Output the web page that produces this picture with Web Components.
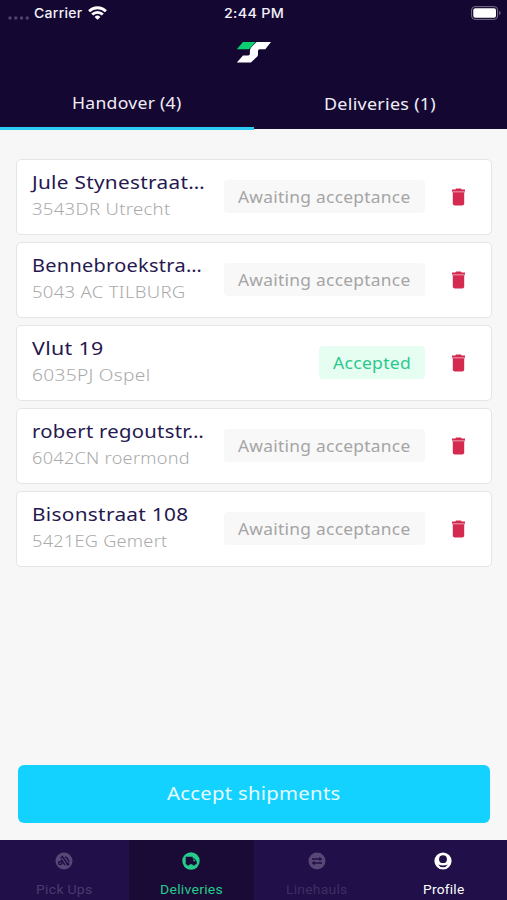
<!DOCTYPE html>
<html lang="en">
<head>
<meta charset="utf-8">
<title>Deliveries</title>
<style>
html,body{margin:0;height:100%;background:#f7f7f7}
body{font-family:"Noto Sans","Open Sans",sans-serif;overflow:hidden}
</style>
</head>
<body>
<courier-app></courier-app>
<script>
const define = (name, html, setup) => customElements.define(name, class extends HTMLElement {
  connectedCallback() {
    if (this.shadowRoot) return;
    this.attachShadow({mode: 'open'}).innerHTML = html;
    if (setup) setup(this, this.shadowRoot);
  }
});

/* One line of text, lightly tracked and widened to the width in its "w" attribute. */
define('fit-text', `<style>
:host{display:block;white-space:nowrap;flex:none}
span{display:inline-block;line-height:inherit;letter-spacing:.25px;transform-origin:0 50%}
</style><span></span>`, (el, root) => {
  const s = root.querySelector('span');
  s.textContent = el.getAttribute('text');
  const w = +el.getAttribute('w');
  const natural = s.getBoundingClientRect().width;
  s.style.transform = `scaleX(${w / natural})`;
  s.style.marginRight = w - natural + 'px';
});

define('status-bar', `<style>
:host{display:grid;grid-template-columns:1fr auto 1fr;align-items:center;height:26px;color:#f3f0f8;font:500 13.5px/26px Inter,sans-serif}
.left{display:flex;align-items:center;padding-left:8px}
.dots{margin-right:5px;margin-top:9px}.wifi{margin-left:5px}
.right{display:flex;justify-content:flex-end;padding-right:6px}
svg{display:block}
</style>
<div class="left">
<svg class="dots" width="21" height="4" fill="#50466a"><circle cx="2" cy="2" r="1.7"/><circle cx="7.8" cy="2" r="1.7"/><circle cx="13.5" cy="2" r="1.7"/><circle cx="19.2" cy="2" r="1.7"/></svg>
<fit-text text="Carrier" w="48.5"></fit-text>
<svg class="wifi" width="19" height="14" viewBox="0 0 19 14" fill="none" stroke="#fff" stroke-width="2.8"><path d="M1.1 5.2a12 12 0 0 1 16.8 0"/><path d="M4.2 8.5a7.6 7.6 0 0 1 10.6 0"/><path d="M6.6 10.9a4.1 4.1 0 0 1 5.8 0L9.5 13.8z" fill="#fff" stroke="none"/></svg>
</div>
<fit-text text="2:44 PM" w="60"></fit-text>
<div class="right"><svg width="30" height="14" viewBox="0 0 30 14"><rect x=".6" y=".6" width="26" height="12.8" rx="3.4" fill="none" stroke="#777087"/><rect x="2.3" y="2.3" width="22.7" height="9.4" rx="2" fill="#fff"/><path d="M28.2 5v4q1.4-.5 1.4-2t-1.4-2" fill="#777087"/></svg></div>`);

define('brand-logo', `<style>:host{display:flex;flex:none;box-sizing:border-box;justify-content:center;padding-top:15px;height:33px}svg{display:block;flex:none}</style>
<svg width="35" height="22" viewBox="0 0 35 22"><path d="M7 1h12.6L13 8.2H.8z" fill="#0bce70"/><path d="M20.6 1H35l-5.7 7.2h-5.8q-1.3 0-1.5 1.5v3.7q-.1 1.5-1.2 2.6l-5.9 5.4H.8l6.2-6.9h5.2q1.7 0 1.7-1.7V10q0-2.2 1.4-3.7z" fill="#fff"/></svg>`);

define('top-tab', `<style>
:host{display:flex;justify-content:center;align-items:flex-end;box-sizing:border-box;height:70px;padding-bottom:12px;border-bottom:3px solid transparent;color:#f1edf6;font-size:15.7px;line-height:22px}
:host([active]){border-color:#2bcdf7;padding-bottom:13px}
</style><slot></slot>`);

define('app-header', `<style>
:host{display:flex;flex:none;flex-direction:column;background:#140832;height:129px}
.tabs{display:grid;grid-template-columns:1fr 1fr;flex:none;margin-top:auto;height:70px;margin-bottom:-1px}
</style>
<status-bar></status-bar><brand-logo></brand-logo>
<div class="tabs"><top-tab active><fit-text text="Handover (4)" w="109.5"></fit-text></top-tab><top-tab><fit-text text="Deliveries (1)" w="112"></fit-text></top-tab></div>`);

define('status-badge', `<style>
:host{display:flex;align-items:center;justify-content:center;box-sizing:border-box;height:33px;padding:1px 14px 0;border-radius:4px;background:#f8f8f8;color:#a5a5a5;font-size:15.7px;line-height:32px}
:host([accepted]){background:#e6fdf2;color:#2ac88d}
</style><slot></slot>`);

define('trash-icon', `<style>:host{display:block}svg{display:block}</style>
<svg width="13" height="18" viewBox="0 0 13 18" fill="#d42a50"><path d="M0 1.6h3.2L4.2.6h4.6l1 1H13v2H0z"/><path d="M0 3.4h13v1.3H0z" opacity=".4"/><path d="M.8 4.3h11.4v11.3a2 2 0 0 1-2 2H2.8a2 2 0 0 1-2-2z"/></svg>`);

define('shipment-card', `<style>
:host{display:flex;align-items:center;box-sizing:border-box;height:76px;padding:0 26.5px 0 15px;border:1.5px solid #e5e5e5;border-radius:5px;background:#fff}
.address{flex:1;display:flex;flex-direction:column;min-width:0;padding-bottom:1px}
.name{color:#26184f;font-size:18px;line-height:27px}
.place{color:#aaa;font-size:16px;font-weight:300;line-height:27px}
trash-icon{margin-left:27px}
</style>
<div class="address"><div class="name"><slot name="name"></slot></div><div class="place"><slot name="place"></slot></div></div>
<slot></slot><trash-icon></trash-icon>`);

define('shipment-list', `<style>
:host{display:flex;flex-direction:column;gap:7px;padding:29.5px 15px 0 15.5px}
</style>` + [
  ['Jule Stynestraat…', 173, '3543DR Utrecht', 138.5],
  ['Bennebroekstra…', 170, '5043 AC TILBURG', 153.5],
  ['Vlut 19', 71.5, '6035PJ Ospel', 118.5, true],
  ['robert regoutstr…', 172, '6042CN roermond', 158],
  ['Bisonstraat 108', 156.5, '5421EG Gemert', 135.5]
].map(([n, nw, p, pw, ok]) => `<shipment-card>
<fit-text slot="name" text="${n}" w="${nw}"></fit-text><fit-text slot="place" text="${p}" w="${pw}"></fit-text>
<status-badge ${ok ? 'accepted' : ''}>${ok ? '<fit-text text="Accepted" w="78"></fit-text>' : '<fit-text text="Awaiting acceptance" w="172.5"></fit-text>'}</status-badge>
</shipment-card>`).join(''));

define('primary-button', `<style>
:host{display:flex;justify-content:center;align-items:center;box-sizing:border-box;height:58.5px;padding-bottom:2px;margin:auto 17px 17px 18px;border-radius:6px;background:#14d2ff;color:#e4fbff;font-size:18px;line-height:26px}
</style><slot></slot>`);

const icons = {
  pickups: '<circle cx="9" cy="9" r="8.5" fill="currentColor"/><g fill="none" stroke="var(--bg)" stroke-width="1.5"><path d="m5.6 6.2 1.8-1.6 6 8.6"/><path d="m10 4.9 1.8.9 2.4 4"/><path d="m6.2 7.5 3.8 5.6"/><circle cx="5.2" cy="11" r="1.6"/></g><circle cx="12.9" cy="12" r="1.6" fill="var(--bg)"/>',
  deliveries: '<circle cx="9" cy="9" r="8.7" fill="currentColor"/><path d="M3.7 4.8h7v1.7h1.9l2.1 2.9v2.8h-1.2a1.7 1.7 0 0 1-3.3 0H7.8a1.7 1.7 0 0 1-3.3 0h-.8z" fill="var(--bg)"/><path d="M11.4 7.4h.9l1.2 1.9h-2.1z" fill="currentColor"/>',
  linehauls: '<circle cx="9" cy="9" r="8.5" fill="currentColor"/><path d="M4 7.1h8M6 11.1h8" stroke="var(--bg)" stroke-width="1.5"/><path d="m11.4 4.7 2.8 2.4-2.8 2.4zM6.6 8.7l-2.8 2.4 2.8 2.4z" fill="var(--bg)"/>',
  profile: '<circle cx="9" cy="9" r="8.6" fill="currentColor"/><circle cx="9" cy="7.2" r="3.9" fill="var(--bg)"/><path d="M4.2 12.4q4.8 2.2 9.6 0-1.5 2.8-4.8 2.8t-4.8-2.8" fill="var(--bg)"/>'
};
define('nav-item', `<style>
:host{--bg:#200f48;display:flex;flex-direction:column;align-items:center;background:var(--bg);color:#514070;padding-top:12px;font:400 13.7px/18px Roboto,sans-serif}
:host([active]){--bg:#1a0b36;color:#25cc8b}
:host([bright]){color:#fff}
:host([dim]){color:#3f2e65}
svg{display:block;margin-bottom:10px}
:host([dim]) svg,:host([muted]) svg{color:#584776}
:host([muted]){color:#4a3a6f}
</style><svg width="18" height="18" viewBox="0 0 18 18"></svg><slot></slot>`, (el, root) => {
  root.querySelector('svg').innerHTML = icons[el.getAttribute('icon')];
});

define('bottom-nav', `<style>
:host{display:grid;grid-template-columns:128.5px 125px 126px 1fr;height:60px;overflow:hidden}
nav-item:first-child{padding-right:1px}
</style>
<nav-item icon="pickups" muted><fit-text text="Pick Ups" w="56.5"></fit-text></nav-item>
<nav-item icon="deliveries" active><fit-text text="Deliveries" w="63"></fit-text></nav-item>
<nav-item icon="linehauls" dim><fit-text text="Linehauls" w="61.5"></fit-text></nav-item>
<nav-item icon="profile" bright><fit-text text="Profile" w="41.5"></fit-text></nav-item>`);

define('courier-app', `<style>
:host{display:flex;flex-direction:column;width:507px;height:900px;background:#f7f7f7}
</style>
<app-header></app-header><shipment-list></shipment-list>
<primary-button><fit-text text="Accept shipments" w="173.5"></fit-text></primary-button>
<bottom-nav></bottom-nav>`);
</script>
</body>
</html>
